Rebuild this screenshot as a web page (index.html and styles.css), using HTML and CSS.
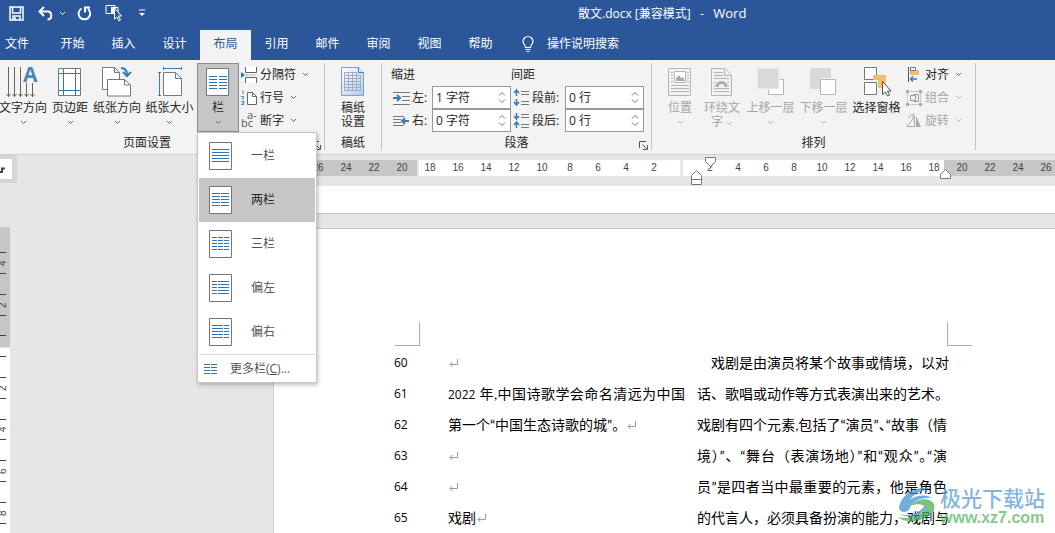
FILE: index.html
```html
<!DOCTYPE html>
<html lang="zh-CN">
<head>
<meta charset="utf-8">
<title>散文.docx [兼容模式] - Word</title>
<link rel="stylesheet" href="styles.css">
</head>
<body>
<svg class="defs" aria-hidden="true">
  <symbol id="chev" viewBox="0 0 7 5"><path d="M1 1l2.500 2.500L6 1" fill="none" stroke="currentColor"/></symbol>
  <symbol id="up" viewBox="0 0 8 5"><path d="M1 4.500l3-3 3 3" fill="none" stroke="currentColor"/></symbol>
  <symbol id="down" viewBox="0 0 8 5"><path d="M1 .5l3 3 3-3" fill="none" stroke="currentColor"/></symbol>
  <symbol id="launch" viewBox="0 0 9 9"><path d="M.5 7V.5H7M3.500 3.500l4 4M8.500 4v4.500H4" fill="none" stroke="#555"/></symbol>
  <symbol id="sheet" viewBox="0 0 24 29"><path d="M.5.5h22v27H.5z" fill="#fff" stroke="#777"/></symbol>
</svg>

<header class="titlebar">
  <div class="quick">
    <button aria-label="保存"><svg width="15" height="15" viewBox="0 0 15 15"><path d="M1 1h13v13H1zM3.500 1v6h8V1M4 14v-4h7v4M6 11v3" fill="none" stroke="#fff" stroke-width="1.500"/></svg></button>
    <button aria-label="撤消" class="undo"><svg width="15" height="15" viewBox="0 0 15 15"><path d="M6 1L1.500 5.500 6 10M2 5.500h7.500c5 0 5 8 0 8" fill="none" stroke="#fff" stroke-width="2"/></svg></button>
    <button aria-label="撤消列表" class="undo-more"><svg width="7" height="5"><use href="#chev"/></svg></button>
    <button aria-label="重复" class="redo"><svg width="15" height="15" viewBox="0 0 15 15"><path d="M4.500 2.500A5.800 5.800 0 1 0 11 3M8 6.500V1.500h5" fill="none" stroke="#fff" stroke-width="2"/></svg></button>
    <button aria-label="选择对象" class="pick"><svg width="18" height="18" viewBox="0 0 18 18"><path d="M1 1.500h9v8H1zM6 3.500h7v6" fill="none" stroke="#fff"/><path d="M6 3h4v6H6z" fill="#fff"/><path d="M9.500 4v11l2.500-2 2 4 1.500-1-2-4h3z" fill="#2b579a" stroke="#fff"/></svg></button>
    <button aria-label="自定义快速访问工具栏" class="custom"><svg width="7" height="8" viewBox="0 0 7 8"><path d="M0 1h6" stroke="#fff"/><path d="M0 4h6L3 7z" fill="#fff"/></svg></button>
  </div>
  <h1 class="title">散文.docx [兼容模式]&nbsp;&nbsp; -&nbsp;&nbsp; <span>Word</span></h1>
</header>

<nav class="tabs">
  <a href="#" class="file">文件</a><a href="#">开始</a><a href="#">插入</a><a href="#">设计</a><a href="#" class="active" aria-current="page">布局</a><a href="#">引用</a><a href="#">邮件</a><a href="#">审阅</a><a href="#">视图</a><a href="#">帮助</a>
  <a href="#" class="tell"><svg width="12" height="17" viewBox="0 0 12 17"><path d="M3.500 11.500C3.500 9 1 8 1 5.500a5 5 0 0 1 10 0C11 8 8.500 9 8.500 11.500zM3.500 13.500h5M4.500 15.500h3" fill="none" stroke="#fff" stroke-width="1.200"/></svg>操作说明搜索</a>
</nav>

<section class="ribbon" aria-label="布局">
  <div class="group setup">
    <div class="tools">
      <button class="big direction"><svg width="32" height="34" viewBox="0 0 32 34"><path d="M1.500 1v30M7.500 1v30M13.500 1v30M19.500 17v14M25.500 17v14M-.5 28l2 2.500 2-2.500M5.500 28l2 2.500 2-2.500M11.500 28l2 2.500 2-2.500M17.500 28l2 2.500 2-2.500M23.500 28l2 2.500 2-2.500" fill="none" stroke="#666"/><text x="16" y="16" class="glyph-a">A</text></svg><span>文字方向</span><svg class="chev" width="7" height="5"><use href="#chev"/></svg></button>
      <button class="big margins"><svg width="32" height="34" viewBox="0 0 32 34"><path d="M4.500 2.500h22v27h-22z" fill="#fff" stroke="#777"/><path d="M9.500 3v26M21.500 3v26M5 7.500h21M5 24.500h21" stroke="#2e75b6"/></svg><span>页边距</span><svg class="chev" width="7" height="5"><use href="#chev"/></svg></button>
      <button class="big orient"><svg width="32" height="34" viewBox="0 0 32 34"><path d="M1.500 1.500h12l5 5v17h-17z" fill="#fff" stroke="#777"/><path d="M13.500 1.500v5h5" fill="none" stroke="#777"/><path d="M6.500 13.500h17l6 5.500v11h-23z" fill="#fff" stroke="#777"/><path d="M23.500 13.500V19h6" fill="none" stroke="#777"/><path d="M20 2c4 0 6 2 6 7M22 6l4 4 4-4" fill="none" stroke="#3a7ab8" stroke-width="2"/></svg><span>纸张方向</span><svg class="chev" width="7" height="5"><use href="#chev"/></svg></button>
      <button class="big size"><svg width="32" height="34" viewBox="0 0 32 34"><path d="M9.500 6.500h12l6 6v17h-18z" fill="#fff" stroke="#777"/><path d="M21.500 6.500v6h6" fill="none" stroke="#777"/><path d="M9 2.500h19M9.500 1v3M27.500 1v3M5.500 6v24M4 6.500h3M4 29.500h3" stroke="#3a7ab8"/></svg><span>纸张大小</span><svg class="chev" width="7" height="5"><use href="#chev"/></svg></button>
      <div class="anchor">
        <button class="big columns" aria-expanded="true"><svg width="32" height="34" viewBox="0 0 32 34"><path d="M4.500 2.500h22v27h-22z" fill="#fff" stroke="#777"/><path d="M7 10.500h8M17 10.500h8M7 13.500h8M17 13.500h8M7 16.500h8M17 16.500h8M7 19.500h8M17 19.500h8M7 22.500h8M17 22.500h8" stroke="#2e75b6"/></svg><span>栏</span><svg class="chev" width="7" height="5"><use href="#chev"/></svg></button>
        <div class="menu" role="menu">
          <button role="menuitem"><svg width="24" height="29"><use href="#sheet"/><path d="M3 7.500h17M3 10.500h17M3 13.500h17M3 16.500h17M3 19.500h17" stroke="#2e75b6"/></svg>一栏</button>
          <button role="menuitem" class="on"><svg width="24" height="29"><use href="#sheet"/><path d="M3 7.500h8m1 0h8M3 10.500h8m1 0h8M3 13.500h8m1 0h8M3 16.500h8m1 0h8M3 19.500h8m1 0h8" stroke="#2e75b6"/></svg>两栏</button>
          <button role="menuitem"><svg width="24" height="29"><use href="#sheet"/><path d="M3 7.500h5m1 0h5m1 0h5M3 10.500h5m1 0h5m1 0h5M3 13.500h5m1 0h5m1 0h5M3 16.500h5m1 0h5m1 0h5M3 19.500h5m1 0h5m1 0h5" stroke="#2e75b6"/></svg>三栏</button>
          <button role="menuitem"><svg width="24" height="29"><use href="#sheet"/><path d="M3 7.500h5m1 0h11M3 10.500h5m1 0h11M3 13.500h5m1 0h11M3 16.500h5m1 0h11M3 19.500h5m1 0h11" stroke="#2e75b6"/></svg>偏左</button>
          <button role="menuitem"><svg width="24" height="29"><use href="#sheet"/><path d="M3 7.500h11m1 0h5M3 10.500h11m1 0h5M3 13.500h11m1 0h5M3 16.500h11m1 0h5M3 19.500h11m1 0h5" stroke="#2e75b6"/></svg>偏右</button>
          <button role="menuitem" class="more"><svg width="14" height="12"><path d="M0 1.500h6m1 0h6M0 4.500h6m1 0h6M0 7.500h6m1 0h6M0 10.500h6m1 0h6" stroke="#2e75b6"/></svg><span>更多栏(<u>C</u>)...</span></button>
        </div>
      </div>
      <div class="stack">
        <button><svg width="16" height="16" viewBox="0 0 16 16"><path d="M4.500 0v5.500h11V0M4.500 16v-5.500h11V16" fill="#fff" stroke="#666"/><path d="M0 5l4 3-4 3z" fill="#2e75b6"/><path d="M5 8h10" stroke="#aaa" stroke-dasharray="2 1"/></svg>分隔符<svg class="chev" width="7" height="5"><use href="#chev"/></svg></button>
        <button><svg width="16" height="16" viewBox="0 0 16 16"><path d="M6.500 2.500h5l4 4v8h-9z" fill="#fff" stroke="#666"/><path d="M11.500 2.500v4h4" fill="none" stroke="#666"/><path d="M1 1h1v3M0 6.500h3L1 9h2M0 11.500h3v3H0M1 13h2" fill="none" stroke="#5b8fc4"/></svg>行号<svg class="chev" width="7" height="5"><use href="#chev"/></svg></button>
        <button><svg width="16" height="16" viewBox="0 0 16 16" class="hyphen"><text x="0" y="14">bc</text><text x="6" y="6">a-</text></svg>断字<svg class="chev" width="7" height="5"><use href="#chev"/></svg></button>
      </div>
    </div>
    <footer>页面设置<button class="launch" aria-label="页面设置对话框"><svg width="9" height="9"><use href="#launch"/></svg></button></footer>
  </div>

  <div class="group paper">
    <div class="tools">
      <button class="big"><svg width="32" height="34" viewBox="0 0 32 34"><defs><linearGradient id="pg" x2="1" y2="1"><stop stop-color="#fff"/><stop offset="1" stop-color="#b3cdec"/></linearGradient></defs><path d="M4.500 1.500h17l5 5v23h-22z" fill="url(#pg)" stroke="#7f9fc8"/><path d="M21.500 1.500v5h5" fill="#dce9f8" stroke="#4c78ae"/><path d="M7.500 6.500h12M7.500 9.500h16M7.500 12.500h16M7.500 15.500h16M7.500 18.500h16M7.500 21.500h16M7.500 24.500h16M7.500 6v19M11.500 6v19M15.500 6v19M19.500 6v19M23.500 9v16" stroke="#a3adbd"/></svg><span>稿纸<br>设置</span></button>
    </div>
    <footer>稿纸</footer>
  </div>

  <div class="group para">
    <div class="fields">
      <div class="head">缩进</div><div class="head second">间距</div>
      <div class="field"><svg width="17" height="14" viewBox="0 0 17 14"><path d="M0 1.500h17M9 5.500h8M9 9.500h8M0 13.500h17" stroke="#777"/><path d="M0 7h6M4 4l3 3-3 3" fill="none" stroke="#3a7ab8" stroke-width="2"/></svg><label for="il">左:</label><div class="spin"><input id="il" value="1 字符"><span class="arrows"><button aria-label="增加左缩进"><svg width="8" height="5"><use href="#up"/></svg></button><button aria-label="减少左缩进"><svg width="8" height="5"><use href="#down"/></svg></button></span></div></div>
      <div class="field second"><svg width="16" height="17" viewBox="0 0 16 17"><path d="M7 2.500h8M7 5.500h8M7 12.500h8M7 15.500h8" stroke="#777"/><path d="M2.500 1v6M0 4l2.500-3L5 4M2.500 10v6M0 13l2.500 3L5 13" fill="none" stroke="#3a7ab8" stroke-width="1.500"/></svg><label for="sb">段前:</label><div class="spin"><input id="sb" value="0 行"><span class="arrows"><button aria-label="增加段前"><svg width="8" height="5"><use href="#up"/></svg></button><button aria-label="减少段前"><svg width="8" height="5"><use href="#down"/></svg></button></span></div></div>
      <div class="field"><svg width="17" height="14" viewBox="0 0 17 14"><path d="M0 2.500h11M0 5.500h8M0 8.500h8M0 11.500h11" stroke="#777"/><path d="M16 7h-6M12 4L9 7l3 3" fill="none" stroke="#3a7ab8" stroke-width="2"/></svg><label for="ir">右:</label><div class="spin"><input id="ir" value="0 字符"><span class="arrows"><button aria-label="增加右缩进"><svg width="8" height="5"><use href="#up"/></svg></button><button aria-label="减少右缩进"><svg width="8" height="5"><use href="#down"/></svg></button></span></div></div>
      <div class="field second"><svg width="16" height="17" viewBox="0 0 16 17"><path d="M7 2.500h8M7 5.500h8M7 12.500h8M7 15.500h8" stroke="#777"/><path d="M2.500 1v6M0 4l2.500 3L5 4M2.500 10v6M0 13l2.500-3L5 13" fill="none" stroke="#3a7ab8" stroke-width="1.500"/></svg><label for="sa">段后:</label><div class="spin"><input id="sa" value="0 行"><span class="arrows"><button aria-label="增加段后"><svg width="8" height="5"><use href="#up"/></svg></button><button aria-label="减少段后"><svg width="8" height="5"><use href="#down"/></svg></button></span></div></div>
    </div>
    <footer>段落<button class="launch" aria-label="段落对话框"><svg width="9" height="9"><use href="#launch"/></svg></button></footer>
  </div>

  <div class="group arrange">
    <div class="tools">
      <button class="big pos" disabled><svg width="32" height="34" viewBox="0 0 32 34"><path d="M4.500 2.500h22v27h-22z" fill="#f3eff3" stroke="#b5b5b5"/><path d="M10.500 5.500h11v11h-11z" fill="#fff" stroke="#b5b5b5"/><path d="M12 15v-3l3-3 2 3 2-1 2 4z" fill="#aaa"/><path d="M7 6.500h2M7 9.500h2M7 12.500h2M7 15.500h2M23 6.500h2M23 9.500h2M23 12.500h2M23 15.500h2M7 19.500h18M7 22.500h18M7 25.500h18" stroke="#b5b5b5"/></svg><span>位置</span><svg class="chev" width="7" height="5"><use href="#chev"/></svg></button>
      <button class="big wrap" disabled><svg width="32" height="34" viewBox="0 0 32 34"><path d="M5.500 2.500h14l6 7v20h-20z" fill="#f3eff3" stroke="#b5b5b5"/><path d="M18.500 2.500v7h7M8 6.500h9M8 9.500h9M8 12.500h15M8 25.500h15M8 16.500h2M21 16.500h2M8 19.500h1M22 19.500h1M8 22.500h15" fill="none" stroke="#b5b5b5"/><path d="M11 21a4.500 4.500 0 0 1 9 0" fill="none" stroke="#aaa" stroke-width="3"/></svg><span>环绕文<br>字 <svg class="chev" width="7" height="5"><use href="#chev"/></svg></span></button>
      <button class="big layer" disabled><svg width="32" height="34" viewBox="0 0 32 34"><path d="M13.500 13.500h15v15h-15z" fill="#fff" stroke="#b5b5b5"/><path d="M2 2h22v21H2z" fill="#dcd7dc" stroke="#f3f3f3"/></svg><span>上移一层</span><svg class="chev" width="7" height="5"><use href="#chev"/></svg></button>
      <button class="big layer" disabled><svg width="32" height="34" viewBox="0 0 32 34"><path d="M2 2h21v21H2z" fill="#dcd7dc"/><path d="M12 12h16v18H12z" fill="#f3f3f3"/><path d="M12.500 13.500h15v15h-15z" fill="#fff" stroke="#b5b5b5"/></svg><span>下移一层</span><svg class="chev" width="7" height="5"><use href="#chev"/></svg></button>
      <button class="big layer"><svg width="32" height="34" viewBox="0 0 32 34"><path d="M3.500 1.500h12v12h-12zM3.500 16.500h12v12h-12z" fill="#fff" stroke="#777"/><path d="M12 9h13v13h-8v-8h-5z" fill="#f0bf6c"/><path d="M21.500 15.500v13l3-2.500 2 4 2-1-2-4h3.500z" fill="#fff" stroke="#555"/></svg><span>选择窗格</span></button>
      <div class="stack">
        <button><svg width="16" height="16" viewBox="0 0 16 16"><path d="M2.500 0v15" stroke="#555"/><path d="M4 3h9v5H4z" fill="#f0bf6c"/><path d="M4.500.5h5v3h-5z" fill="#fff" stroke="#777"/><path d="M4 12h7M7 9.500L4.500 12 7 14.500" fill="none" stroke="#3a7ab8" stroke-width="1.500"/></svg>对齐<svg class="chev" width="7" height="5"><use href="#chev"/></svg></button>
        <button disabled><svg width="16" height="16" viewBox="0 0 16 16"><path d="M1.500 1.500h13v13h-13z" fill="none" stroke="#b5b5b5" stroke-dasharray="2 1"/><path d="M4.500 5.500h5v5h-5zM7.500 4.500h5v7h-5" fill="none" stroke="#999"/><path d="M0 0h3v3H0zM13 0h3v3h-3zM0 13h3v3H0zM13 13h3v3h-3z" fill="#aaa"/></svg>组合<svg class="chev" width="7" height="5"><use href="#chev"/></svg></button>
        <button disabled><svg width="16" height="16" viewBox="0 0 16 16"><path d="M8.500 4v9.500H1zM3 5c0-3 3-4 5-2M6 1l3 2-3 2" fill="none" stroke="#aaa"/><path d="M10 3v11h5z" fill="#aaa"/></svg>旋转<svg class="chev" width="7" height="5"><use href="#chev"/></svg></button>
      </div>
    </div>
    <footer>排列</footer>
  </div>
</section>

<main class="workspace">
  <aside class="rail">
    <div class="corner"><svg width="12" height="20"><path d="M0 13h2V9.500H5" fill="none" stroke="#444" stroke-width="2"/></svg></div>
    <svg class="vruler" width="10" height="320" viewBox="0 0 10 320">
      <path d="M0 0h10v120H0z" fill="#c6c6c6"/><path d="M0 121h10v199H0z" fill="#fff"/>
      <path d="M0 25.500h6M0 46.500h6M0 67.500h6M0 88.500h6M0 108.500h6M0 129.500h6M0 150.500h6M0 171.500h6M0 192.500h6M0 212.500h6M0 233.500h6M0 254.500h6M0 275.500h6M0 296.500h6" stroke="#444"/>
      <g><text transform="translate(6 39) rotate(-90)">4</text><text transform="translate(6 81) rotate(-90)">2</text><text transform="translate(6 164) rotate(-90)">2</text><text transform="translate(6 205) rotate(-90)">4</text><text transform="translate(6 247) rotate(-90)">6</text><text transform="translate(6 289) rotate(-90)">8</text></g>
    </svg>
  </aside>
  <div class="canvas">
    <div class="hruler">
      <span>28</span><span>26</span><span>24</span><span>22</span><span>20</span><span>18</span><span>16</span><span>14</span><span>12</span><span>10</span><span>8</span><span>6</span><span>4</span><span>2</span><span></span><span>2</span><span>4</span><span>6</span><span>8</span><span>10</span><span>12</span><span>14</span><span>16</span><span>18</span><span>20</span><span>22</span><span>24</span><span>26</span>
      <svg class="mark first" width="12" height="12"><path d="M.5.5h10v4l-5 5-5-5z" fill="#fff" stroke="#777"/></svg>
      <svg class="mark hang" width="12" height="16"><path d="M.5 14.500v-9l5-5 5 5v9zM.5 9.500h10" fill="#fff" stroke="#777"/></svg>
      <svg class="mark right" width="12" height="11"><path d="M.5 9.500v-4l5-5 5 5v4z" fill="#fff" stroke="#777"/></svg>
    </div>
    <div class="previous"></div>
    <article class="page">
      <div class="crops"><i class="crop-left"></i><i class="crop-right"></i></div>
      <div class="text">
        <div class="numbers"><span>60</span><span>61</span><span>62</span><span>63</span><span>64</span><span>65</span></div>
        <div class="column one">
          <p><svg class="ret" width="9" height="9" viewBox="0 0 9 9"><path d="M8.500 0v5.500H1M3.500 3L1 5.500 3.500 8" fill="none" stroke="#999"/></svg></p>
          <p class="full"><span class="num">2022</span> 年,中国诗歌学会命名清远为中国</p>
          <p>第一个“中国生态诗歌的城”。<svg class="ret" width="9" height="9" viewBox="0 0 9 9"><path d="M8.500 0v5.500H1M3.500 3L1 5.500 3.500 8" fill="none" stroke="#999"/></svg></p>
          <p><svg class="ret" width="9" height="9" viewBox="0 0 9 9"><path d="M8.500 0v5.500H1M3.500 3L1 5.500 3.500 8" fill="none" stroke="#999"/></svg></p>
          <p><svg class="ret" width="9" height="9" viewBox="0 0 9 9"><path d="M8.500 0v5.500H1M3.500 3L1 5.500 3.500 8" fill="none" stroke="#999"/></svg></p>
          <p>戏剧<svg class="ret" width="9" height="9" viewBox="0 0 9 9"><path d="M8.500 0v5.500H1M3.500 3L1 5.500 3.500 8" fill="none" stroke="#999"/></svg></p>
        </div>
        <div class="column two">
          <p class="indent">戏剧是由演员将某个故事或情境，以对</p>
          <p>话、歌唱或动作等方式表演出来的艺术。</p>
          <p class="full">戏剧有四个元素,包括了“演员”<span class="half">、</span>“故事（情</p>
          <p class="full">境）”、“舞台（表演场地）”和“观众”<span class="half">。</span>“演</p>
          <p class="full">员”是四者当中最重要的元素，他是角色</p>
          <p>的代言人，必须具备扮演的能力，戏剧与</p>
        </div>
      </div>
    </article>
  </div>
  <div class="watermark">
    <svg width="44" height="42" viewBox="0 0 44 42"><path d="M3 22C6 8 20 1 36 3 26 5 17 9 14 15 22 9 32 10 36 13 26 12 16 16 14 23 12 28 3 29 3 22z" fill="#3f93d2"/><path d="M14 21c7-8 20-9 24-2 3 7-6 15-19 17-8 1-14-1-17-4 8 2 19 1 25-5 6-7-4-10-13-6z" fill="#4bae5b"/><path d="M4 29c10 3 20-1 25-9 3 8-13 16-25 9z" fill="#4a9cd5"/></svg>
    <div><strong>极光下载站</strong><b>www.xz7.com</b></div>
  </div>
</main>
</body>
</html>
```

FILE: styles.css
```css
* { box-sizing: border-box; }
body {
  margin: 0; height: 100vh; overflow: hidden;
  display: flex; flex-direction: column;
  font: 12px/14px "Open Sans", "Noto Sans CJK SC", sans-serif;
  color: #262626; background: #e6e6e6;
}
button { font: inherit; color: inherit; border: 0; padding: 0; background: none; }
a { color: inherit; text-decoration: none; }
svg { overflow: visible; flex: none; }
.defs { position: absolute; width: 0; height: 0; }
.chev { color: #666; }

.titlebar { display: flex; align-items: center; height: 26px; flex: none; background: #2b579a; color: #fff; }
.quick { display: flex; align-items: center; width: 578px; padding-left: 9px; }
.quick button { display: flex; }
.quick .chev, .undo-more { color: #fff; }
.undo { margin-left: 14px; }
.undo-more { margin-left: 6px; }
.redo { margin-left: 11px; }
.pick { margin-left: 13px; }
.custom { margin-left: 16px; }
.title { margin: 0; font-size: 12px; font-weight: 400; white-space: nowrap; }
.title span { font-size: 13px; }

.tabs { display: flex; align-items: flex-end; height: 34px; flex: none; background: #2b579a; color: #fff; }
.tabs a { display: flex; align-items: center; justify-content: center; width: 51px; height: 30px; padding-bottom: 2px; }
.tabs .file { width: 47px; justify-content: flex-start; padding-left: 5px; }
.tabs .active { background: #f3f3f3; color: #2b579a; }
.tabs .tell { width: auto; margin-left: 16px; gap: 13px; white-space: nowrap; }

.ribbon { display: flex; flex: none; height: 95px; padding: 3px 0 4px; background: #f3f3f3; border-bottom: 1px solid #d0d0d0; }
.group { display: flex; flex-direction: column; border-right: 1px solid #c3c3c3; }
.group footer { display: flex; flex: 1; align-items: center; justify-content: center; position: relative; padding-top: 4px; }
.tools { display: flex; height: 69px; }
.launch { position: absolute; right: 3px; bottom: 0; display: flex; }
.setup { width: 325px; }
.setup footer { padding-right: 30px; }
.paper { width: 57px; }
.para { width: 270px; }
.arrange { width: 324px; }

.big { display: flex; flex-direction: column; align-items: center; gap: 1px; padding-top: 3px; width: 48px; white-space: nowrap; text-align: center; }
.big > .chev { margin-top: 4px; }
.big:disabled, .stack button:disabled { color: #a6a6a6; }
:disabled .chev { color: #b5b5b5; }
.direction { margin-left: -1px; }
.glyph-a { font: bold 21px "Open Sans", sans-serif; fill: #4a86bd; }
.margins { width: 46px; }
.size { width: 57px; }
.anchor { position: relative; z-index: 2; width: 41px; margin-left: -1px; }
.columns { width: 42px; height: 69px; padding-top: 2px; background: #c6c6c6; border: 1px solid #8e8e8e; }
.stack { display: flex; flex-direction: column; padding-left: 3px; }
.stack button { display: flex; align-items: center; gap: 3px; height: 23px; white-space: nowrap; }
.stack .chev { margin-left: 3px; }
.hyphen { font: 11px "Open Sans", sans-serif; fill: #555; }
.paper .tools { justify-content: center; }

.menu { position: absolute; top: 69px; left: 0; width: 120px; padding: 1px 1px 0; background: #fff; border: 1px solid #c6c6c6; box-shadow: 1px 2px 4px rgba(0, 0, 0, .25); color: #555; }
.menu button { display: flex; align-items: center; gap: 18px; width: 100%; height: 44px; padding-left: 10px; white-space: nowrap; }
.menu .on { background: #c6c6c6; color: #262626; }
.menu .more { height: 28px; gap: 12px; padding-left: 5px; border-top: 1px solid #dcdcdc; }

.fields { display: grid; grid-template-columns: 123px 1fr; grid-template-rows: 23px 23px 23px; height: 69px; padding-left: 9px; }
.head { align-self: center; }
.field { display: flex; align-items: center; padding-left: 2px; }
.head.second { margin-left: -3px; }
.field label { width: 20px; margin-left: 2px; flex: none; white-space: nowrap; }
.field.second label { width: 33px; }
.field.second { padding-left: 0; }
.spin { display: flex; width: 79px; height: 23px; background: #fff; border: 1px solid #999; }
.spin input { flex: 1; min-width: 0; border: 0; padding: 0 0 0 3px; background: none; font: inherit; color: inherit; }
.arrows { display: flex; flex-direction: column; justify-content: space-evenly; padding-right: 4px; color: #777; }
.arrows button { display: flex; }

.arrange .pos { width: 40px; }
.arrange .wrap { width: 44px; }
.arrange .layer { width: 53px; }
.arrange .tools { padding-left: 8px; }
.arrange .stack { padding-left: 3px; }

.workspace { position: relative; display: flex; flex: 1; min-height: 0; overflow: hidden; }
.rail { width: 273px; flex: none; }
.corner { width: 17px; height: 28px; padding: 4px 0; background: #d5d5d5; }
.corner svg { display: block; background: #fff; }
.vruler { display: block; margin-top: 44px; font: 10px "Liberation Sans", sans-serif; fill: #444; }
.canvas { flex: 1; min-width: 0; padding-top: 5px; }
.hruler {
  position: relative; display: flex; height: 16px; padding-left: 3px;
  font: 10px/16px "Liberation Sans", sans-serif; color: #444;
  background: linear-gradient(90deg, #c6c6c6 144px, #e6e6e6 144px 146px, #fff 146px 407px, #e6e6e6 407px 410px, #fff 410px 671px, #c6c6c6 671px);
}
.hruler span { flex: none; width: 28px; text-align: center; }
.mark { position: absolute; }
.first { left: 432px; top: -3px; }
.hang { left: 418px; top: 10px; }
.right { left: 667px; top: 9px; }
.previous { height: 28px; margin-top: 10px; background: #fff; border-bottom: 1px solid #c6c6c6; }
.page { margin-top: 14px; height: 100%; padding: 93px 0 0 120px; background: #fff; border-top: 1px solid #c6c6c6; border-left: 1px solid #d0d0d0; color: #000; }
.crops { display: flex; gap: 527px; padding-left: 1px; }
.crops i { flex: none; width: 25px; height: 24px; border-bottom: 1px solid #aaa; }
.crop-left { border-right: 1px solid #aaa; }
.crop-right { border-left: 1px solid #aaa; }
.text { display: grid; grid-template-columns: 54px 249px 250px; padding-top: 1px; line-height: 31px; }
.numbers { display: flex; flex-direction: column; font: 12px/31px "Open Sans", sans-serif; }
.column { font: 14px/31px Lato, "Noto Sans CJK SC", sans-serif; white-space: nowrap; }
.column p { margin: 0; height: 31px; }
.one .full { width: 237px; }
.full { text-align-last: justify; }
.num { font: 12px/14px "Open Sans", sans-serif; }
.indent { padding-left: 14px; }
.half { font-feature-settings: "halt"; }
.ret { margin-left: 1px; }

.watermark { position: absolute; right: 10px; bottom: 6px; display: flex; align-items: center; opacity: .75; }
.watermark div { display: flex; flex-direction: column; }
.watermark strong { font: 500 21px/24px "Noto Sans CJK SC", sans-serif; color: #5b9bd5; }
.watermark b { font: bold 16px/18px "Liberation Sans", sans-serif; color: #5cb868; }
```
